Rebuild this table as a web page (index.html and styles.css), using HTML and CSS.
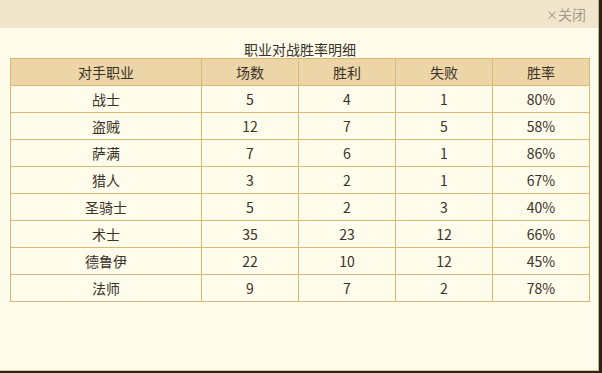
FILE: index.html
```html
<!DOCTYPE html>
<html lang="zh-CN">
<head>
<meta charset="utf-8">
<title>职业对战胜率明细</title>
<link rel="stylesheet" href="styles.css">
</head>
<body>
<div class="dialog">
  <div class="dialog-head">
    <span class="close"><span class="x">×</span>关闭</span>
  </div>
  <div class="dialog-body">
    <div class="title">职业对战胜率明细</div>
    <table class="stats">
      <thead>
        <tr><th class="c-name">对手职业</th><th>场数</th><th>胜利</th><th>失败</th><th>胜率</th></tr>
      </thead>
      <tbody>
        <tr><td>战士</td><td>5</td><td>4</td><td>1</td><td>80%</td></tr>
        <tr><td>盗贼</td><td>12</td><td>7</td><td>5</td><td>58%</td></tr>
        <tr><td>萨满</td><td>7</td><td>6</td><td>1</td><td>86%</td></tr>
        <tr><td>猎人</td><td>3</td><td>2</td><td>1</td><td>67%</td></tr>
        <tr><td>圣骑士</td><td>5</td><td>2</td><td>3</td><td>40%</td></tr>
        <tr><td>术士</td><td>35</td><td>23</td><td>12</td><td>66%</td></tr>
        <tr><td>德鲁伊</td><td>22</td><td>10</td><td>12</td><td>45%</td></tr>
        <tr><td>法师</td><td>9</td><td>7</td><td>2</td><td>78%</td></tr>
      </tbody>
    </table>
  </div>
</div>
</body>
</html>
```
FILE: styles.css
```css
html, body {
  margin: 0;
  padding: 0;
}
body {
  background: #2b2417;
  width: 602px;
  height: 373px;
  overflow: hidden;
  font-family: "Noto Sans CJK SC", "Liberation Sans", sans-serif;
  font-size: 14px;
  color: #3a3128;
}
.dialog {
  width: 599px;
  height: 371px;
  background: #fffcec;
  border-right: 1px solid #c9b48a;
  border-bottom: 1px solid #d8c9a0;
  box-sizing: border-box;
  display: flex;
  flex-direction: column;
}
.dialog-head {
  height: 28px;
  background: #f1e6cb;
  display: flex;
  align-items: center;
  justify-content: flex-end;
  padding-right: 12px;
  flex-shrink: 0;
}
.close {
  color: #a09a8e;
  font-size: 14px;
  line-height: 16px;
}
.close .x {
  font-size: 12px;
}
.dialog-body {
  padding: 12px 0 0 10px;
}
.title {
  width: 580px;
  text-align: center;
  line-height: 18px;
}
.stats {
  width: 580px;
  border-collapse: collapse;
  table-layout: fixed;
}
.stats th, .stats td {
  border: 1px solid #dcb870;
  height: 26px;
  padding: 0;
  text-align: center;
  font-weight: normal;
  line-height: 16px;
}
.stats th {
  background: #ecd5a6;
}
.stats th.c-name {
  width: 190px;
}
```
